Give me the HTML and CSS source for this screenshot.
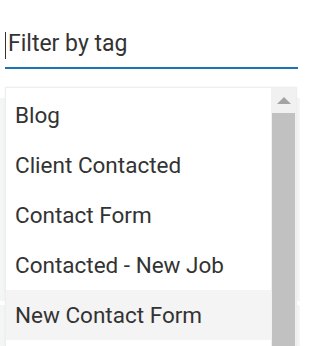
FILE: index.html
```html
<!DOCTYPE html>
<html>
<head>
<meta charset="utf-8">
<link rel="stylesheet" href="styles.css">
</head>
<body>
<div class="page">
  <div class="search">
    <div class="input"><span class="caret"></span><span class="placeholder">Filter by tag</span></div>
  </div>
  <div class="backdrop">
    <div class="band band-a"></div>
    <div class="band-gap"></div>
    <div class="band band-b"></div>
  </div>
  <div class="dropdown">
    <ul class="options">
      <li class="option">Blog</li>
      <li class="option">Client Contacted</li>
      <li class="option">Contact Form</li>
      <li class="option">Contacted - New Job</li>
      <li class="option option-hover">New Contact Form</li>
    </ul>
    <div class="scrollbar">
      <div class="scroll-btn"><span class="arrow-up"></span></div>
      <div class="scroll-thumb"></div>
    </div>
  </div>
</div>
</body>
</html>
```

FILE: styles.css
```css
html, body {
  margin: 0;
  padding: 0;
  background: #fff;
}
body {
  width: 300px;
  height: 346px;
  overflow: hidden;
  font-family: Roboto, "Liberation Sans", sans-serif;
  color: #333;
}
.page {
  position: relative;
  height: 346px;
  overflow: hidden;
}
.search {
  padding: 0 2px 0 5px;
  height: 69px;
  box-sizing: border-box;
}
.input {
  height: 69px;
  border-bottom: 2px solid #1b75ae;
  display: flex;
  align-items: flex-end;
  padding-bottom: 10px;
  box-sizing: border-box;
}
.caret {
  display: inline-block;
  width: 1px;
  height: 27px;
  background: #333;
  margin-right: 2px;
  margin-bottom: -2px;
}
.placeholder {
  font-size: 23px;
  line-height: 26px;
  color: #333;
}
.backdrop {
  margin-top: 29px;
  display: flex;
  flex-direction: column;
}
.band {
  background: #f4f5f5;
}
.band-a {
  height: 203px;
}
.band-gap {
  height: 4px;
  background: #fff;
}
.band-b {
  height: 50px;
}
.dropdown {
  position: absolute;
  top: 87px;
  left: 5px;
  width: 292px;
  height: 259px;
  background: #fff;
  border: 1px solid #eeeeee;
  border-bottom: 0;
  box-sizing: border-box;
  box-shadow: 0 0 2px rgba(0,0,0,0.06);
  display: flex;
  overflow: hidden;
}
.options {
  list-style: none;
  margin: 0;
  padding: 2px 0 0 0;
  flex: 1;
  overflow: hidden;
}
.option {
  height: 50px;
  line-height: 50px;
  padding-left: 9px;
  font-size: 22.5px;
  color: #333;
  white-space: nowrap;
}
.option-hover {
  background: #f4f4f4;
}
.scrollbar {
  width: 25px;
  background: #f1f1f1;
  display: flex;
  flex-direction: column;
  margin-top: -1px;
}
.scroll-btn {
  height: 26px;
  flex: none;
  display: flex;
  align-items: center;
  justify-content: center;
}
.arrow-up {
  width: 0;
  height: 0;
  border-left: 7px solid transparent;
  border-right: 7px solid transparent;
  border-bottom: 7px solid #a3a3a3;
}
.scroll-thumb {
  flex: 1;
  margin: 0 1px;
  background: #c1c1c1;
}
```
